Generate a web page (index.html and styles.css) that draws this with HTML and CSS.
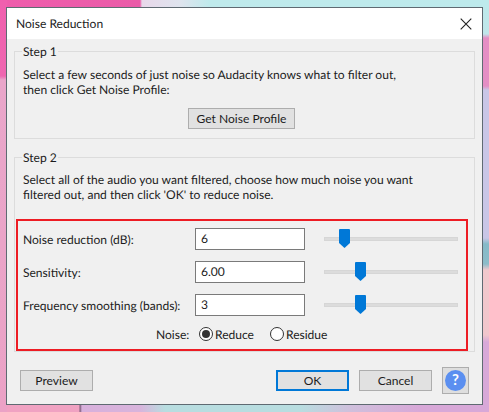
FILE: index.html
```html
<!DOCTYPE html>
<html lang="en">
<head>
<meta charset="utf-8">
<title>Noise Reduction</title>
<link rel="stylesheet" href="styles.css">
</head>
<body>
<main class="dialog">
  <header class="titlebar">
    <span class="title">Noise Reduction</span>
    <svg class="close" width="12" height="12" viewBox="0 0 12 12"><path d="M.7.7l10.6 10.6M11.3.7L.7 11.3" fill="none" stroke="#222" stroke-width="1.1"/></svg>
  </header>
  <div class="body">
    <section class="group group-one">
      <span class="legend">Step 1</span>
      <p class="desc">Select a few seconds of just noise so Audacity knows what to filter out,<br>then click Get Noise Profile:</p>
      <div class="center"><button class="btn btn-profile">Get Noise Profile</button></div>
    </section>
    <section class="group group-two">
      <span class="legend">Step 2</span>
      <p class="desc">Select all of the audio you want filtered, choose how much noise you want<br>filtered out, and then click 'OK' to reduce noise.</p>
      <div class="redbox">
        <div class="row">
          <label class="lbl">Noise reduction (dB):</label>
          <div class="input">6</div>
          <div class="slider"><svg class="thumb t1" width="11" height="19" viewBox="0 0 11 19"><path d="M1 0h9a1 1 0 0 1 1 1v13l-5.5 5L0 14V1a1 1 0 0 1 1-1z" fill="#0078d7"/></svg></div>
        </div>
        <div class="row">
          <label class="lbl">Sensitivity:</label>
          <div class="input">6.00</div>
          <div class="slider"><svg class="thumb t2" width="11" height="19" viewBox="0 0 11 19"><path d="M1 0h9a1 1 0 0 1 1 1v13l-5.5 5L0 14V1a1 1 0 0 1 1-1z" fill="#0078d7"/></svg></div>
        </div>
        <div class="row">
          <label class="lbl">Frequency smoothing (bands):</label>
          <div class="input">3</div>
          <div class="slider"><svg class="thumb t2" width="11" height="19" viewBox="0 0 11 19"><path d="M1 0h9a1 1 0 0 1 1 1v13l-5.5 5L0 14V1a1 1 0 0 1 1-1z" fill="#0078d7"/></svg></div>
        </div>
        <div class="noise">
          <span class="noise-label">Noise:</span>
          <span class="radio on"></span><span class="radio-text">Reduce</span>
          <span class="radio"></span><span class="radio-text">Residue</span>
        </div>
      </div>
    </section>
    <footer class="actions">
      <button class="btn">Preview</button>
      <div class="spacer"></div>
      <button class="btn btn-ok">OK</button>
      <button class="btn">Cancel</button>
      <div class="help"><span class="help-dot">?</span></div>
    </footer>
  </div>
</main>
</body>
</html>
```
FILE: styles.css
```css
* { box-sizing: border-box; }
html, body { margin: 0; height: 100%; }
html { overflow: hidden; }
body {
  width: 489px;
  height: 412px;
  overflow: hidden;
  padding: 8px 7px 0;
  font-family: "Lato", "Open Sans", sans-serif;
  font-size: 12.05px;
  text-rendering: geometricPrecision;
  color: #1c1c1c;
  background:
    linear-gradient(180deg, #f05fae 0, #ee66b0 76px, #e9a6ca 80px, #eba2c6 100%) left top / 7px 100% no-repeat,
    linear-gradient(90deg, #ef5dac 0, #ea5ba8 140px, #e8d8ea 142px, #dfe4ee 180px, #bfeaec 210px, #bdeaec 100%) left top / 100% 8px no-repeat,
    linear-gradient(180deg, #bdeaec 0, #c0e6ea 34px, #e58ec4 38px, #e48ec4 86px, #c9c6e6 90px, #c9c6e6 238px, #86bac8 244px, #8cbcc9 264px, #f1c8cc 270px, #f1c6cc 335px, #d8a8d8 342px, #d8a8d8 100%) right top / 7px 100% no-repeat,
    linear-gradient(90deg, #f0a2c2 0, #f0a2c2 79px, #7c5a78 80px, #d8b0dc 82px, #d8b4dc 140px, #b8dde0 165px, #b8dde0 300px, #cfc0dc 350px, #d8a8d8 420px, #d8a8d8 100%) left bottom / 100% 8px no-repeat,
    #c9c6e6;
}
.dialog {
  width: 475px;
  height: 396px;
  background: #f0f0f0;
  box-shadow: 0 0 0 1px #5f6a72;
  display: flex;
  flex-direction: column;
}
.titlebar {
  height: 31px;
  flex: none;
  background: #fff;
  display: flex;
  align-items: center;
  justify-content: space-between;
  padding: 0 10px 0 9px;
}
.close { display: block; }
.body { padding: 12px 7px 0; flex: 1; display: flex; flex-direction: column; }
.group {
  position: relative;
  border: 1px solid #dcdcdc;
  margin: 0;
}
.group-one { height: 88px; padding: 0 8px; }
.group-two { height: 195px; margin-top: 18px; padding: 0 1px; }
.legend {
  position: absolute;
  left: 7px;
  top: -7px;
  background: #f0f0f0;
  padding: 0 1px;
  line-height: 14px;
}
.desc { margin: 0; line-height: 15px; }
.group-one .desc { padding: 15px 0 0 0; }
.group-two .desc { padding: 14px 0 0 7px; }
.center { display: flex; justify-content: center; margin-top: 11px; padding-right: 6px; }
.btn {
  font: inherit;
  color: inherit;
  width: 73px;
  height: 21px;
  padding: 0;
  background: #e1e1e1;
  border: 1px solid #adadad;
  flex: none;
}
.btn-profile { width: 107px; }
.btn-ok { border: 2px solid #0078d7; }
.redbox {
  margin-top: 17px;
  height: 132px;
  width: 452px;
  border: 2px solid #ed1c24;
  padding: 7px 6px 0 5px;
}
.row { display: flex; align-items: center; height: 22px; margin-bottom: 11px; }
.lbl { width: 172px; flex: none; }
.input {
  width: 110px;
  height: 22px;
  flex: none;
  background: #fff;
  border: 1px solid #7a7a7a;
  padding-left: 5px;
  line-height: 20px;
}
.slider {
  position: relative;
  width: 134px;
  height: 4px;
  margin-left: 19px;
  background: #dcdcdc;
  border: 1px solid #d6d6d6;
}
.thumb { position: absolute; top: -9px; display: block; }
.t1 { left: 14px; }
.t2 { left: 30px; }
.noise { display: flex; align-items: center; height: 22px; margin-top: -4px; padding-left: 133px; }
.noise-label { width: 43px; }
.radio {
  width: 14px;
  height: 14px;
  flex: none;
  border: 1px solid #333;
  border-radius: 50%;
  background: #fff;
  display: flex;
  align-items: center;
  justify-content: center;
  margin-right: 2px;
}
.radio.on::after { content: ""; width: 8px; height: 8px; border-radius: 50%; background: #333; }
.radio-text { width: 55px; }
.actions { display: flex; align-items: center; gap: 10px; margin-top: 15px; padding-left: 6px; padding-right: 6px; }
.spacer { flex: 1; }
.help {
  width: 27px;
  height: 27px;
  flex: none;
  background: #dedede;
  border: 1px solid #adadad;
  display: flex;
  align-items: center;
  justify-content: center;
}
.help-dot {
  width: 21px;
  height: 21px;
  border-radius: 50%;
  background: #5b8ff0;
  color: #fff;
  font-weight: 700;
  font-size: 15px;
  line-height: 21px;
  text-align: center;
}
```
